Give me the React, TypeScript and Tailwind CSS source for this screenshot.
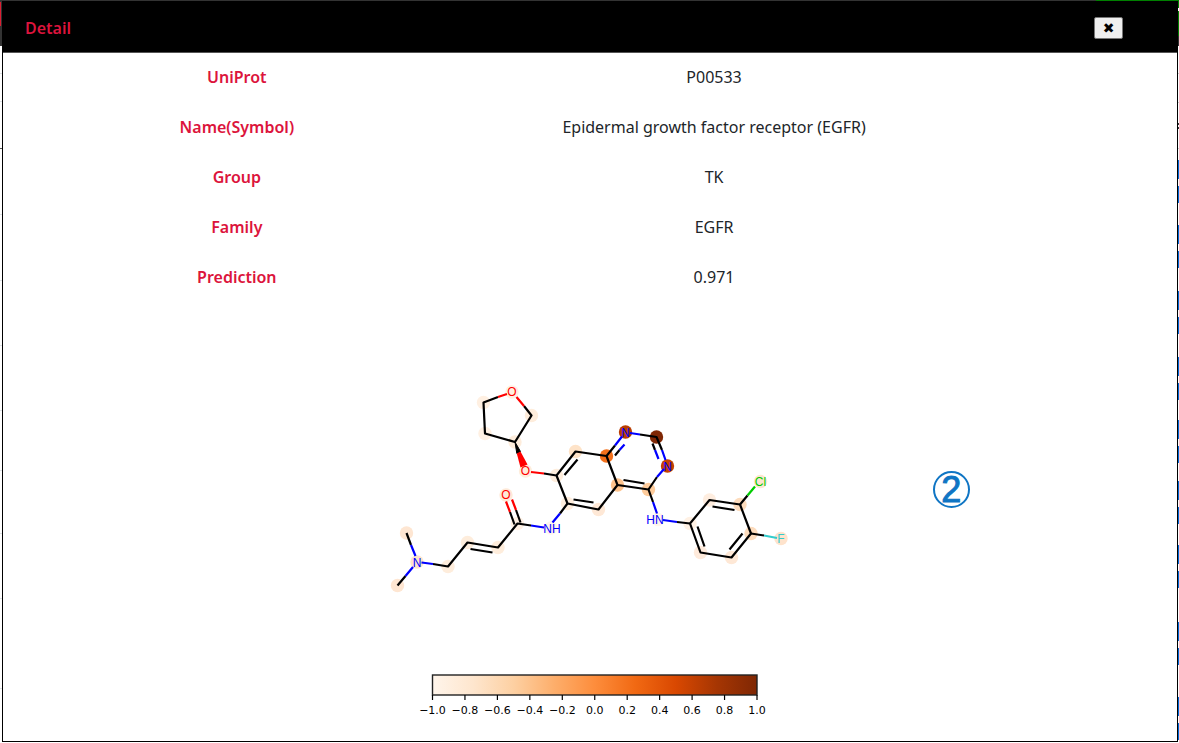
const rows: [string, string][] = [
  ['UniProt', 'P00533'],
  ['Name(Symbol)', 'Epidermal growth factor receptor (EGFR)'],
  ['Group', 'TK'],
  ['Family', 'EGFR'],
  ['Prediction', '0.971'],
];

// x, y, fill of the highlight behind each atom
const halos: [number, number, string][] = [
  [512, 392, '#fff0e2'],
  [483.5, 402.5, '#fff0e2'],
  [485, 433.5, '#fff0e2'],
  [515, 442, '#feeddc'],
  [531.5, 415.5, '#feeddc'],
  [525.5, 471, '#feeddc'],
  [556.5, 475.5, '#feeddc'],
  [575.5, 451.5, '#fee3c8'],
  [606.5, 456, '#f3701b'],
  [625.5, 432, '#b93d02'],
  [656.5, 437, '#7f2704'],
  [667.5, 466, '#c54102'],
  [648.5, 489.5, '#fdcb9b'],
  [617.5, 485, '#fdc28c'],
  [598.5, 509.5, '#fee8d6'],
  [567.5, 503.5, '#feeddc'],
  [551, 528, '#fff5eb'],
  [517.5, 523.5, '#fff1e4'],
  [506, 495, '#fee9d8'],
  [498, 547.5, '#feeddc'],
  [467.5, 542.5, '#feeddc'],
  [448, 566.5, '#feeddc'],
  [417, 562, '#fee3cc'],
  [406.5, 533, '#fee6d2'],
  [397.5, 585.5, '#fee6d2'],
  [658, 519.5, '#fff5eb'],
  [690, 523.5, '#fff1e4'],
  [709.5, 500, '#feeddf'],
  [740, 504.5, '#fddcbd'],
  [760.5, 481.5, '#fee5d0'],
  [751, 533.5, '#fddcbd'],
  [781, 538.5, '#fee3cc'],
  [731.5, 557.5, '#fee8d6'],
  [700.5, 552.5, '#feeadb'],
];

const bonds: [string, string][] = [
  ['#000', 'M498 397 L483.5 402.5 L485 433.5 L515 442 L531.5 415.5 L524 406'],
  ['#f00', 'M498 397 L507 394 M524 406 L516.5 397'],
  ['#000', 'M544 473.5 L556.5 475.5 L575.5 451.5 L606.5 456 L617.5 485 L598.5 509.5 L567.5 503.5 L556.5 475.5'],
  ['#f00', 'M531 472 L544 473.5'],
  ['#000', 'M564.5 475 L577.5 459.5 M573.5 499.5 L593.5 502.5'],
  ['#000', 'M606.5 456 L615 445.5 M640 434.5 L656.5 437 L662 450 M657 477 L648.5 489.5 L617.5 485 M648.5 489.5 L653 502'],
  ['#00f', 'M615 445.5 L622 436.5 M630 433 L640 434.5 M662 450 L665.5 460 M657 477 L664 469 M653 502 L657 513.5'],
  ['#000', 'M615 455.5 L619.5 450 M652.5 443.5 L655 450 M623.5 480 L644.5 483.5'],
  ['#00f', 'M619.5 450 L624.5 444.5 M655 450 L658.5 459'],
  ['#00f', 'M663 520 L677 522'],
  ['#000', 'M677 522 L690 523.5 L709.5 500 L740 504.5 L751 533.5 L731.5 557.5 L700.5 552.5 L690 523.5'],
  ['#000', 'M712.5 506.5 L734.5 510 M742.5 533.5 L729.5 549.5 M697.5 526.5 L704.5 546.5'],
  ['#000', 'M740 504.5 L747.5 495.5 M751 533.5 L764 535.5'],
  ['#0c0', 'M747.5 495.5 L755 486.5'],
  ['#3cc', 'M764 535.5 L777 538'],
  ['#000', 'M567.5 503.5 L560 513.5 M531 525.5 L517.5 523.5 L498 547.5 L467.5 542.5 L448 566.5 L433 564'],
  ['#00f', 'M560 513.5 L552.5 522.5 M544 527.5 L531 525.5 M433 564 L421.5 562.5'],
  ['#000', 'M470.5 549 L492.5 552.5 M520.5 522.5 L516 510 M514.5 524.5 L510 512'],
  ['#f00', 'M516 510 L512 499.5 M510 512 L506 501.5'],
  ['#000', 'M406.5 533 L411 545 M397.5 585.5 L405.5 576'],
  ['#00f', 'M411 545 L415.5 556 M405.5 576 L413 567'],
];

const atoms: [string, number, number, string][] = [
  ['O', 512, 396, '#f00'],
  ['O', 525.5, 475, '#f00'],
  ['O', 506, 499, '#f00'],
  ['N', 625.5, 436.5, '#00f'],
  ['N', 667.5, 470.5, '#00f'],
  ['HN', 655, 524, '#00f'],
  ['NH', 552, 533, '#00f'],
  ['N', 417, 566.5, '#00f'],
  ['Cl', 760.5, 486, '#0c0'],
  ['F', 781, 543, '#3cc'],
];

const ticks = ['−1.0', '−0.8', '−0.6', '−0.4', '−0.2', '0.0', '0.2', '0.4', '0.6', '0.8', '1.0'];
const ramp = ['#fff5eb', '#fee6ce', '#fdd0a2', '#fdae6b', '#fd8d3c', '#f16913', '#d94801', '#a63603', '#7f2704'];

const leftLines = 'M0 73.5h2M0 101.5h2M0 214.5h2M0 280.5h2M0 345.5h2M0 410.5h2M0 470.5h2M0 533.5h2M0 598.5h2M0 688.5h2';
const linkTops = [160, 225, 291, 357, 420, 481, 545, 622, 697];

function Figure() {
  return (
    <svg viewBox="390 380 400 340" className="w-[400px]" role="img" aria-label="Atom contributions of the molecule">
      {halos.map(([x, y, fill]) => (
        <circle key={`${x}-${y}`} cx={x} cy={y} r="6.7" fill={fill} />
      ))}
      {bonds.map(([stroke, d]) => (
        <path key={d} d={d} stroke={stroke} strokeWidth="2.2" fill="none" strokeLinejoin="round" />
      ))}
      <path d="M515 442 L520.5 451.5 L516.8 453.5 Z" fill="#000" stroke="#000" />
      <path d="M520.5 451.5 L527.5 464.5 L520.5 467.5 L516.8 453.5 Z" fill="#f00" />
      {atoms.map(([label, x, y, fill]) => (
        <text key={`${x}-${y}`} x={x} y={y} fill={fill} textAnchor="middle" className="font-['Liberation_Sans',sans-serif] text-[12px]">
          {label}
        </text>
      ))}
      <defs>
        <linearGradient id="ramp">
          {ramp.map((color, i) => (
            <stop key={color} offset={i / 8} stopColor={color} />
          ))}
        </linearGradient>
      </defs>
      <rect x="432.5" y="675" width="324.5" height="20" fill="url(#ramp)" stroke="#222" strokeWidth="1.4" />
      {ticks.map((tick, i) => (
        <g key={tick}>
          <path d={`M${432.5 + i * 32.45} 695v5`} stroke="#000" strokeWidth="1.2" />
          <text x={432.5 + i * 32.45} y="714" textAnchor="middle" className="font-['DejaVu_Sans',sans-serif] text-[11px]">
            {tick}
          </text>
        </g>
      ))}
    </svg>
  );
}

export default function App() {
  return (
    <div className="grid min-h-screen grid-cols-[2px_1fr_1px] bg-white pb-px font-['Noto_Sans',sans-serif] text-base text-[#212529]">
      <svg className="w-[2px]" height="742" aria-hidden="true">
        <path d="M0 0h2v46H0z" fill="#333" />
        <path d="M0 2h1v24H0z" fill="#dc1e32" />
        <path d={leftLines} stroke="#dee2e6" />
        <path d="M0 148.5h2" stroke="#555" />
      </svg>

      <div className="flex flex-col">
        <div className="flex h-px bg-[#333]">
          <div className="ml-auto w-[7%] bg-[#008000]" />
        </div>
        <section role="dialog" aria-labelledby="title" className="flex flex-1 flex-col border border-black bg-white">
          <header className="flex h-[51px] items-center justify-between border-b border-[#555] bg-black pt-0.5 pr-[54px] pl-[22px]">
            <h1 id="title" className="font-semibold text-[#dc143c]">Detail</h1>
            <button
              type="button"
              aria-label="Close"
              className="flex h-[22px] w-[29px] items-center justify-center rounded-xs border border-[#767676] bg-[#efefef] font-['DejaVu_Sans',sans-serif] text-[14px] leading-none font-bold text-black"
            >
              ✖
            </button>
          </header>

          <table className="w-[81.3%] table-fixed text-center">
            <tbody>
              {rows.map(([label, value]) => (
                <tr key={label} className="h-[50px]">
                  <th scope="row" className="w-[49%] pb-0.5 font-semibold text-[#dc143c]">{label}</th>
                  <td className="pb-0.5">{value}</td>
                </tr>
              ))}
            </tbody>
          </table>

          <div className="relative flex justify-center pt-[77px] pb-5">
            <Figure />
            <span className="absolute top-[168px] left-[79.2%] flex size-[37px] items-center justify-center rounded-full border-2 border-[#0f75c4] font-['Liberation_Sans',sans-serif] text-[36px] leading-none text-[#0f75c4] [-webkit-text-stroke:1px_#0f75c4]">
              2
            </span>
          </div>
        </section>
      </div>

      <svg className="w-px" height="742" aria-hidden="true">
        <path d="M0 0h1v36H0z" fill="#008000" />
        <path d="M0 8h1v3H0z" fill="#fff" />
        <path d="M0 36h1v10H0z" fill="#333" />
        <path d="M0 73.5h1M0 102.5h1M0 148.5h1" stroke="#ccc" />
        <path d="M0 123h1v2H0zM0 127h1v2H0z" fill="#333" />
        {linkTops.map((y) => (
          <path key={y} d={`M0 ${y}h1v19H0zM0 ${y + 26}h1v17H0z`} fill="#0069d9" />
        ))}
      </svg>
    </div>
  );
}
